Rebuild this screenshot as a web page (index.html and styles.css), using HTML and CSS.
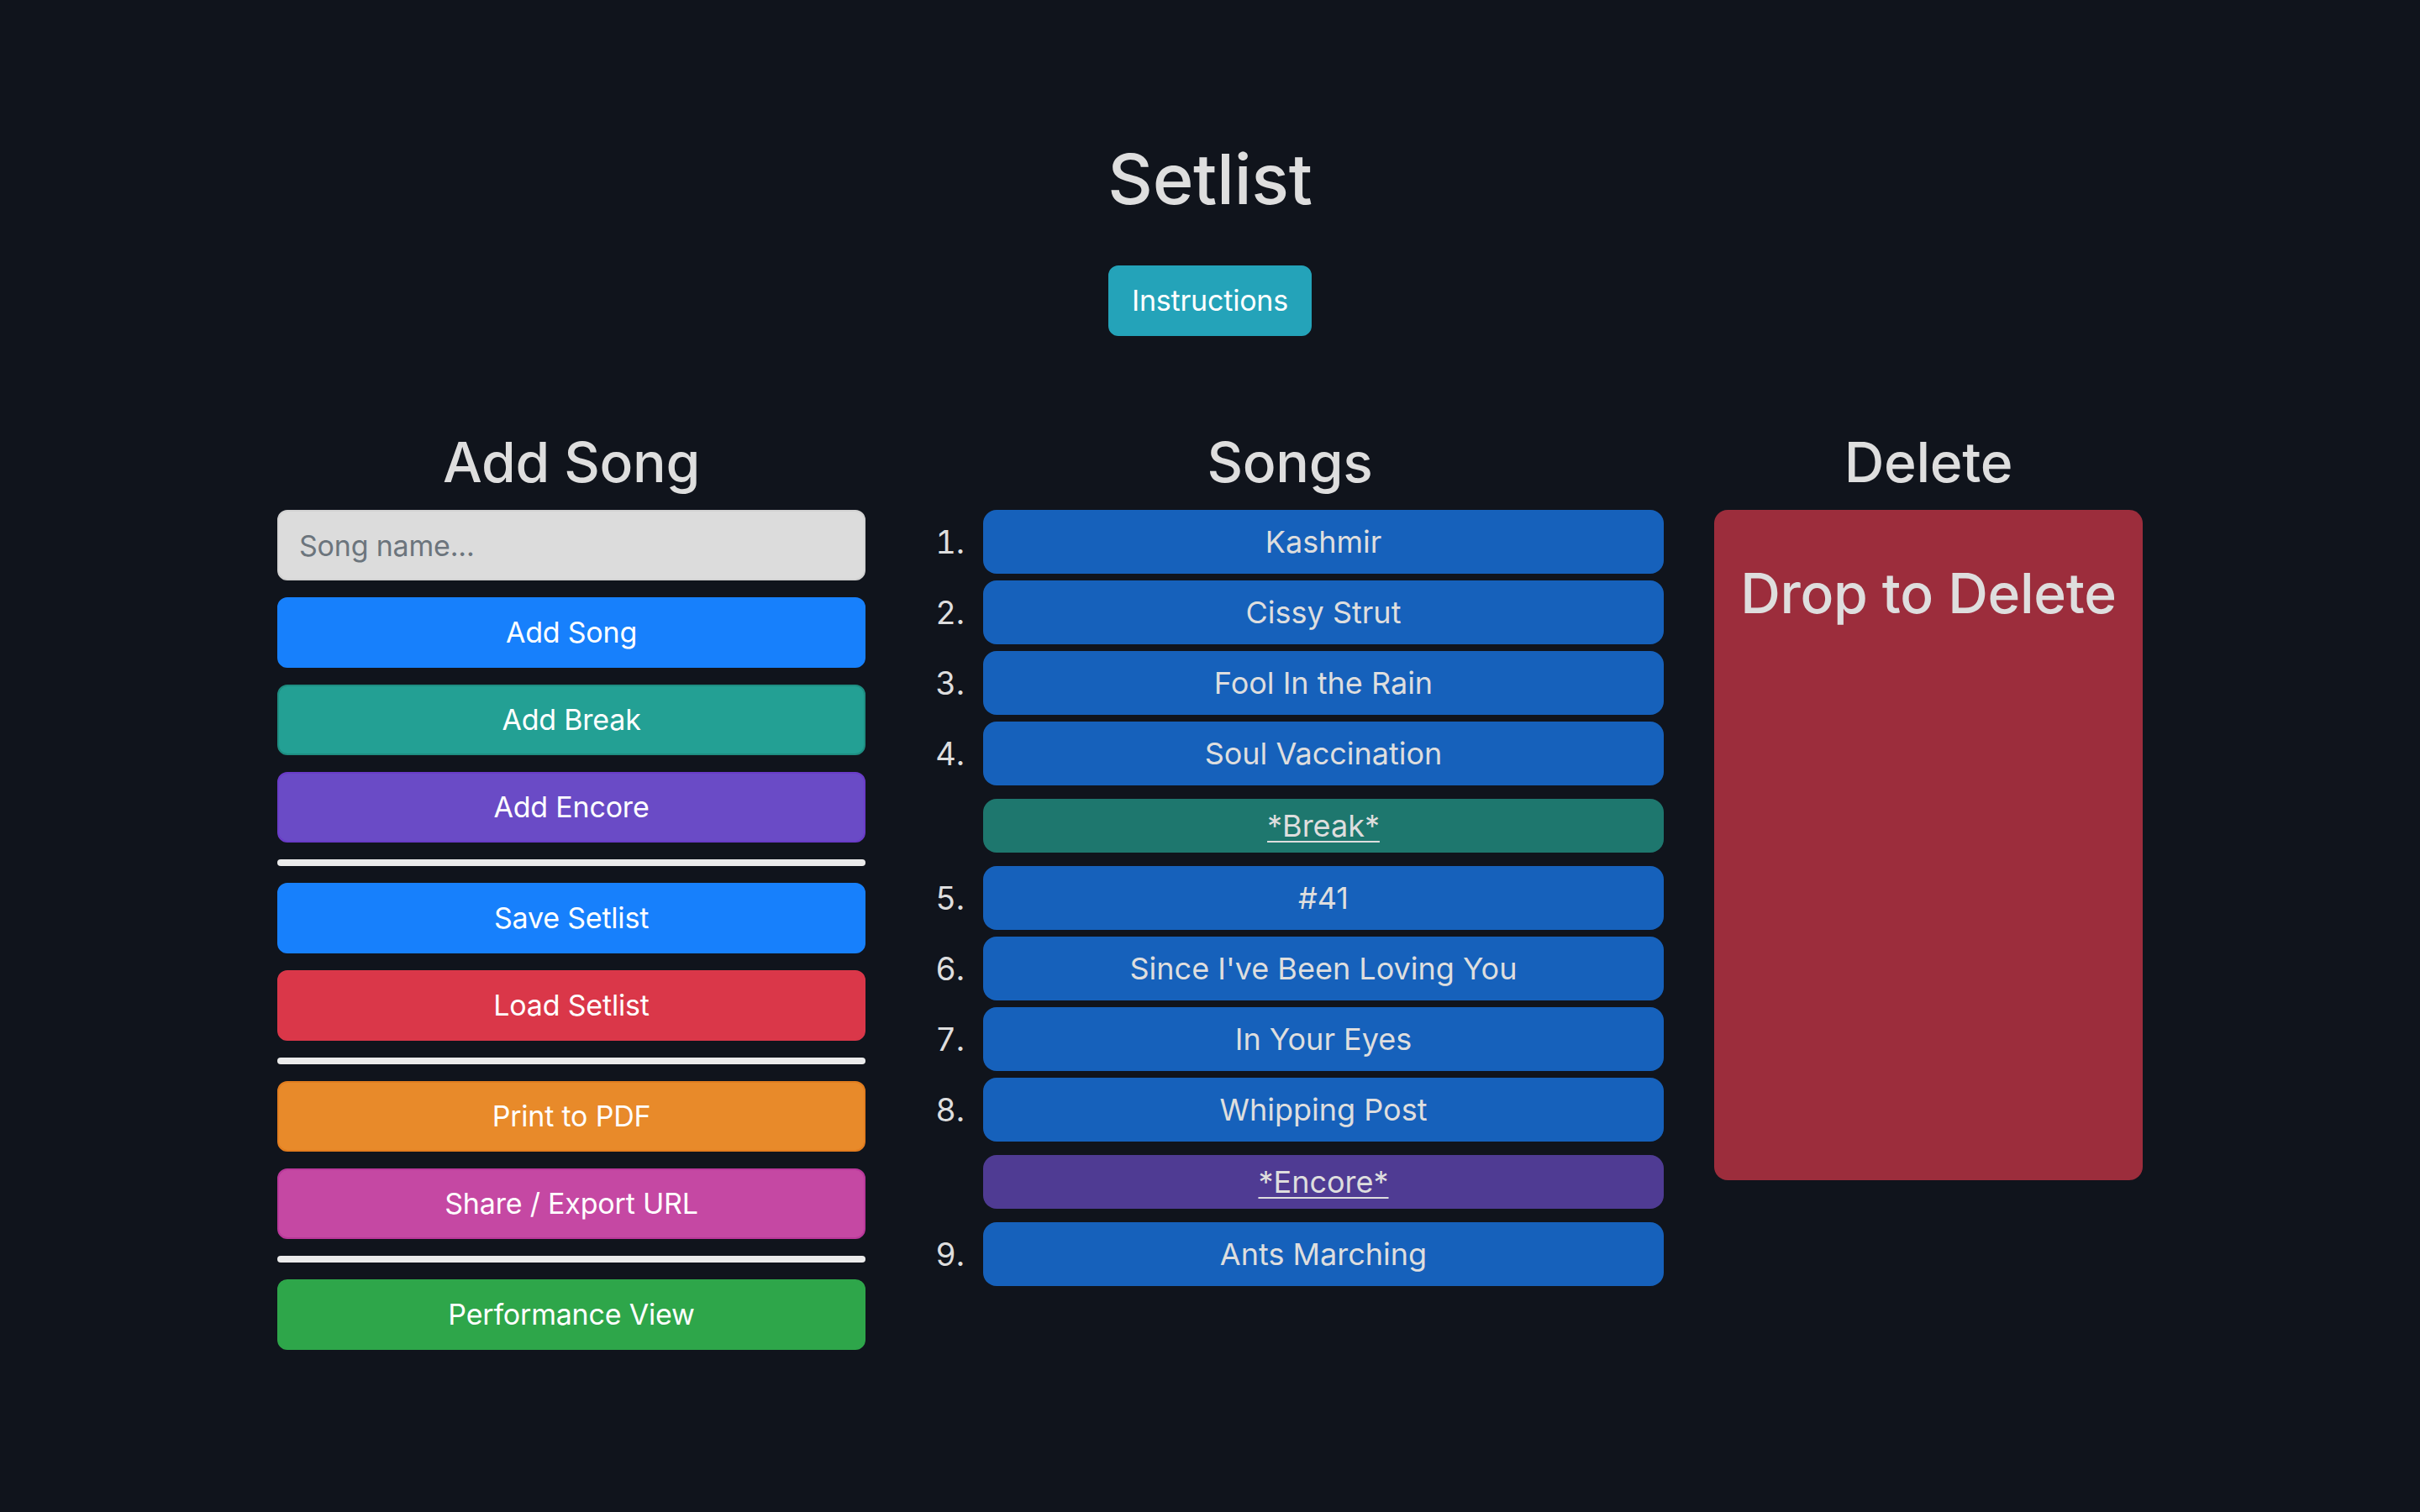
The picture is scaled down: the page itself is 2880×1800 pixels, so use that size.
FILE: index.html
```html
<!DOCTYPE html>
<html lang="en">
<head>
<meta charset="utf-8">
<title>Setlist</title>
<link rel="stylesheet" href="styles.css">
</head>
<body>
<div class="page">
  <header class="top">
    <h1 class="title">Setlist</h1>
    <button class="btn btn-info">Instructions</button>
  </header>
  <main class="columns">
    <section class="col col-add">
      <h2 class="col-title">Add Song</h2>
      <div class="stack">
        <input class="song-input" type="text" placeholder="Song name...">
        <button class="btn btn-blue">Add Song</button>
        <button class="btn btn-teal">Add Break</button>
        <button class="btn btn-purple">Add Encore</button>
        <hr class="sep">
        <button class="btn btn-blue">Save Setlist</button>
        <button class="btn btn-red">Load Setlist</button>
        <hr class="sep">
        <button class="btn btn-orange">Print to PDF</button>
        <button class="btn btn-pink">Share / Export URL</button>
        <hr class="sep">
        <button class="btn btn-green">Performance View</button>
      </div>
    </section>
    <section class="col col-songs">
      <h2 class="col-title">Songs</h2>
      <ol class="songs">
        <li class="row"><span class="num">1.</span><span class="item">Kashmir</span></li>
        <li class="row"><span class="num">2.</span><span class="item">Cissy Strut</span></li>
        <li class="row"><span class="num">3.</span><span class="item">Fool In the Rain</span></li>
        <li class="row"><span class="num">4.</span><span class="item">Soul Vaccination</span></li>
        <li class="row row-marker"><span class="num"></span><span class="item item-break"><a class="marker-link" href="#">*Break*</a></span></li>
        <li class="row"><span class="num">5.</span><span class="item">#41</span></li>
        <li class="row"><span class="num">6.</span><span class="item">Since I've Been Loving You</span></li>
        <li class="row"><span class="num">7.</span><span class="item">In Your Eyes</span></li>
        <li class="row"><span class="num">8.</span><span class="item">Whipping Post</span></li>
        <li class="row row-marker"><span class="num"></span><span class="item item-encore"><a class="marker-link" href="#">*Encore*</a></span></li>
        <li class="row"><span class="num">9.</span><span class="item">Ants Marching</span></li>
      </ol>
    </section>
    <section class="col col-delete">
      <h2 class="col-title">Delete</h2>
      <div class="dropzone">
        <h2 class="drop-title">Drop to Delete</h2>
      </div>
    </section>
  </main>
</div>
</body>
</html>
```
FILE: styles.css
```css
* { box-sizing: border-box; }

html, body {
  margin: 0;
  padding: 0;
  background: #10141c;
}

body {
  font-family: "Inter", "Noto Sans", sans-serif;
  color: #dedede;
  min-height: 1800px;
}

.page {
  padding-top: 165px;
}

.top {
  display: flex;
  flex-direction: column;
  align-items: center;
}

.title {
  margin: 0;
  font-size: 83px;
  line-height: 96px;
  letter-spacing: -0.3px;
  font-weight: 500;
  color: #dedede;
}

.btn {
  display: block;
  font-family: inherit;
  font-size: 34px;
  line-height: 48px;
  letter-spacing: -0.2px;
  font-weight: 400;
  color: #ffffff;
  border: 2px solid transparent;
  border-radius: 12px;
  padding: 16px 26px;
  text-align: center;
  cursor: pointer;
}

.btn-info {
  margin-top: 55px;
  background: #24a3b9;
  border-color: #24a3b9;
  height: 84px;
}

.columns {
  display: flex;
  justify-content: center;
  align-items: flex-start;
  gap: 60px;
  margin-top: 112px;
}

.col-title {
  margin: 0 0 18px;
  font-size: 66px;
  line-height: 77px;
  letter-spacing: -0.3px;
  font-weight: 500;
  text-align: center;
  color: #dedede;
}

.col-add { width: 700px; }
.col-songs { width: 890px; }
.col-delete { width: 510px; }

.stack {
  display: flex;
  flex-direction: column;
  gap: 20px;
}

.stack .btn {
  width: 100%;
  height: 84px;
}

.song-input {
  width: 100%;
  height: 84px;
  background: #dcdcdc;
  border: 2px solid #d2d2d2;
  border-radius: 12px;
  padding: 0 24px;
  font-family: inherit;
  font-size: 34px;
  letter-spacing: -0.2px;
  color: #222;
  outline: none;
}

.song-input::placeholder { color: #6c757d; }

.sep {
  margin: 0;
  height: 8px;
  border: 0;
  border-radius: 4px;
  background: #ebebeb;
}

.btn-blue   { background: #1780fc; border-color: #1780fc; }
.btn-teal   { background: #23a094; border-color: #1e8d81; }
.btn-purple { background: #6a4bc6; border-color: #6a3cc8; }
.btn-red    { background: #da3749; border-color: #da3749; }
.btn-orange { background: #e88a2a; border-color: #e27d1f; }
.btn-pink   { background: #c548a3; border-color: #b9389a; }
.btn-green  { background: #2ea64a; border-color: #2ea64a; }

.songs {
  list-style: none;
  margin: 0;
  padding: 0;
  display: flex;
  flex-direction: column;
  gap: 8px;
}

.row {
  display: flex;
  align-items: center;
}

.num {
  width: 80px;
  flex: none;
  text-align: right;
  padding-right: 22px;
  font-size: 38px;
  font-variant-numeric: tabular-nums;
  color: #dedede;
}

.item {
  flex: 1;
  height: 76px;
  display: flex;
  align-items: center;
  justify-content: center;
  background: #1661bb;
  border-radius: 16px;
  font-size: 36px;
  color: #dedede;
}

.row-marker { margin: 8px 0; }

.item-break,
.item-encore { height: 64px; }

.item-break  { background: #1e776e; }
.item-encore { background: #4f3b93; }

.marker-link {
  color: #dedede;
  text-decoration: underline;
  text-underline-offset: 5px;
  text-decoration-thickness: 2px;
}

.dropzone {
  height: 798px;
  background: #9c2d3c;
  border-radius: 16px;
  padding-top: 61px;
}

.drop-title {
  margin: 0;
  font-size: 66px;
  line-height: 77px;
  letter-spacing: -0.3px;
  font-weight: 500;
  text-align: center;
  color: #dedede;
}
```
